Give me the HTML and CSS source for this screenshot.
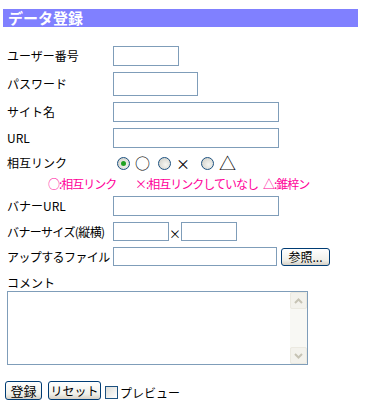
FILE: index.html
```html
<!DOCTYPE html>
<html lang="ja">
<head>
    <meta charset="UTF-8">
    <title>データ登録</title>
    <link rel="stylesheet" href="styles.css">
</head>
<body>
    <h1 class="title">データ登録</h1>
    <form class="entry">
        <div class="row">
            <label class="name">ユーザー番号</label>
            <input type="text" class="field w-user">
        </div>
        <div class="row">
            <label class="name">パスワード</label>
            <input type="password" class="field w-pass">
        </div>
        <div class="row">
            <label class="name">サイト名</label>
            <input type="text" class="field w-long">
        </div>
        <div class="row">
            <label class="name">URL</label>
            <input type="text" class="field w-long">
        </div>
        <div class="row radios">
            <span class="name">相互リンク</span>
            <label class="opt opt1"><input type="radio" name="link" checked><span class="mark circle">○</span></label>
            <label class="opt opt2"><input type="radio" name="link"><span class="mark">×</span></label>
            <label class="opt"><input type="radio" name="link"><span class="mark big">△</span></label>
        </div>
        <div class="note">
            <span class="n1">○:相互リンク</span>
            <span class="n2">×:相互リンクしていなし</span>
            <span>△:錐梓ン</span>
        </div>
        <div class="row">
            <label class="name">バナーURL</label>
            <input type="text" class="field w-long">
        </div>
        <div class="row">
            <label class="name tight">バナーサイズ(縦横)</label>
            <input type="text" class="field w-size">
            <span class="times">×</span>
            <input type="text" class="field w-size">
        </div>
        <div class="row">
            <label class="name tight">アップするファイル</label>
            <input type="text" class="field w-file">
            <button type="button" class="btn browse">参照...</button>
        </div>

        <div class="comment-label">コメント</div>
        <div class="comment">
            <textarea></textarea>
            <div class="scroll">
                <div class="arrow">
                    <svg width="9" height="6" viewBox="0 0 9 6"><path d="M1 5 L4.5 1.5 L8 5" fill="none" stroke="#c6c3b4" stroke-width="2"/></svg>
                </div>
                <div class="track"></div>
                <div class="arrow">
                    <svg width="9" height="6" viewBox="0 0 9 6"><path d="M1 1 L4.5 4.5 L8 1" fill="none" stroke="#c6c3b4" stroke-width="2"/></svg>
                </div>
            </div>
        </div>

        <div class="actions">
            <button type="submit" class="btn submit">登録</button>
            <button type="reset" class="btn reset">リセット</button>
            <label class="preview"><input type="checkbox">プレビュー</label>
        </div>
    </form>
</body>
</html>
```

FILE: styles.css
```css
body {
    margin: 0;
    font-family: "Noto Sans CJK JP", "DejaVu Sans", sans-serif;
    font-size: 12px;
    color: #000;
    background-color: #fff;
}

.title {
    margin: 9px 20px 0 3px;
    width: 355px;
    height: 18px;
    padding-left: 5px;
    box-sizing: border-box;
    background-color: #8080ff;
    color: #fff;
    font-size: 15px;
    font-weight: bold;
    line-height: 18px;
}

.entry {
    padding: 19px 0 0 7px;
}

.row {
    display: flex;
    align-items: center;
    margin-bottom: 6px;
}

.name {
    width: 106px;
    flex: none;
    line-height: 14px;
    white-space: nowrap;
}

.tight {
    letter-spacing: -0.6px;
}

.field {
    height: 20px;
    box-sizing: border-box;
    margin: 0;
    padding: 1px 2px;
    border: 1px solid #7f9db9;
    font: inherit;
}

.w-user { width: 66px; }
.w-pass { width: 85px; height: 24px; }
.w-long { width: 166px; }
.w-size { width: 56px; height: 19px; }
.w-file { width: 164px; height: 19px; }

.times {
    width: 12px;
    text-align: center;
    line-height: 14px;
    padding-top: 4px;
}

/* radio row */
.radios {
    height: 18px;
}

.opt {
    display: flex;
    align-items: center;
    padding-left: 4px;
}

.opt1 { width: 37px; }
.opt2 { width: 39px; }

.opt input {
    appearance: none;
    -webkit-appearance: none;
    width: 13px;
    height: 13px;
    margin: 0 5px 0 0;
    border: 1px solid #1c5180;
    border-radius: 50%;
    background: radial-gradient(circle at 60% 60%, #f6f6f2 0%, #dcdcd6 60%, #c9c9c2 100%);
    box-sizing: border-box;
    position: relative;
}

.opt input:checked::after {
    content: "";
    position: absolute;
    left: 3px;
    top: 3px;
    width: 5px;
    height: 5px;
    border-radius: 50%;
    background: #21a121;
}

.mark {
    font-size: 14px;
    line-height: 16px;
}

.mark.circle {
    font-size: 15px;
}

.mark.big {
    font-size: 17px;
}

.note {
    display: flex;
    margin: 0 0 6px 41px;
    height: 12px;
    line-height: 12px;
    color: #ff0099;
    white-space: nowrap;
    letter-spacing: -1px;
}

.n1 { width: 87px; flex: none; }
.n2 { width: 128px; flex: none; }

/* buttons */
.btn {
    margin: 0;
    padding: 0;
    height: 19px;
    border: 1px solid #003c74;
    border-radius: 3px;
    background: linear-gradient(#ffffff, #f0f0ea 70%, #d6d0c5);
    font: inherit;
    font-size: 12px;
    line-height: 15px;
    color: #000;
    white-space: nowrap;
}

.browse {
    width: 49px;
    height: 18px;
    margin-left: 4px;
}

/* comment */
.comment-label {
    margin-top: 11px;
    line-height: 12px;
    height: 12px;
}

.comment {
    display: flex;
    width: 301px;
    height: 74px;
    margin-top: 2px;
    border: 1px solid #7f9db9;
    box-sizing: border-box;
}

.comment textarea {
    flex: 1;
    border: none;
    margin: 0;
    padding: 2px;
    resize: none;
    font: inherit;
}

.scroll {
    width: 17px;
    display: flex;
    flex-direction: column;
    background-color: #f7f7f2;
}

.arrow {
    height: 17px;
    display: flex;
    align-items: center;
    justify-content: center;
    box-sizing: border-box;
    border: 1px solid #ebe9e0;
    border-radius: 2px;
    background-color: #f3f2ec;
}

.track {
    flex: 1;
    background-color: #f8f8f4;
}

.actions {
    display: flex;
    align-items: center;
    margin: 16px 0 0 -2px;
}

.submit {
    width: 37px;
    font-size: 13px;
}

.reset {
    width: 53px;
    margin-left: 6px;
}

.preview {
    display: flex;
    align-items: center;
    margin-left: 4px;
    padding-top: 4px;
    line-height: 14px;
}

.preview input {
    appearance: none;
    -webkit-appearance: none;
    width: 13px;
    height: 13px;
    margin: 0 2px 0 0;
    border: 1px solid #1c5180;
    background: linear-gradient(135deg, #dcdcd7, #ffffff);
    box-sizing: border-box;
}
```
